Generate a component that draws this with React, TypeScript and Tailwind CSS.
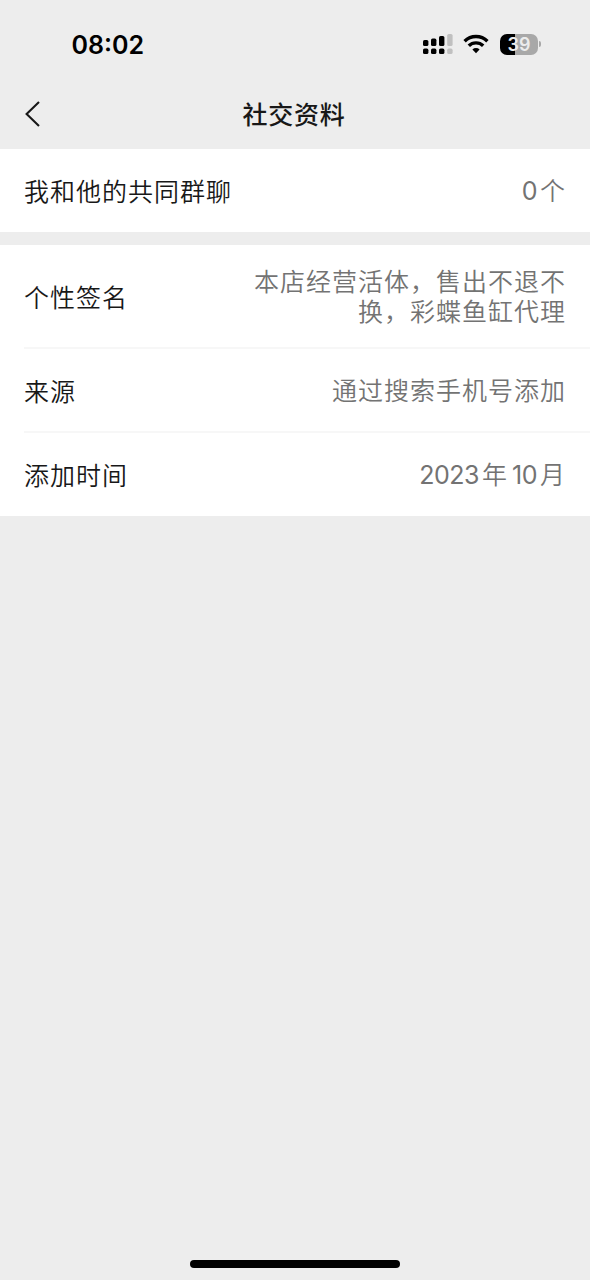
import React from 'react';

const SignalIcon = () => (
  <svg width="30" height="22" viewBox="0 0 30 22" fill="#000">
    <rect x="0" y="7" width="5.4" height="6" rx="1.6" />
    <rect x="8" y="5.6" width="5.4" height="7.4" rx="1.6" />
    <rect x="16" y="3" width="5.4" height="10" rx="1.6" />
    <rect x="24.2" y="1" width="5.4" height="12" rx="1.6" fill="#c0c0c0" />
    <rect x="0" y="15.6" width="5.4" height="5.4" rx="1.6" />
    <rect x="8" y="15.6" width="5.4" height="5.4" rx="1.6" />
    <rect x="16" y="15.6" width="5.4" height="5.4" rx="1.6" />
    <rect x="24.2" y="15.6" width="5.4" height="5.4" rx="1.6" fill="#c0c0c0" />
  </svg>
);

const WifiIcon = () => (
  <svg width="26" height="20" viewBox="0 0 26 20" fill="none" stroke="#000" strokeWidth="3.4">
    <path d="M1.6 7.2a16.2 16.2 0 0 1 22.8 0" />
    <path d="M5.8 11.8a10.3 10.3 0 0 1 14.4 0" />
    <path d="M13 19.2l-3.6-3.7a5.2 5.2 0 0 1 7.2 0z" fill="#000" stroke="none" />
  </svg>
);

const Battery = () => (
  <div className="flex items-center">
    <div className="flex h-[21px] w-[38px] items-center justify-center rounded-[7px] bg-linear-to-r from-black from-40% to-[#a8a8a8] to-40% pt-px font-['Inter'] text-[18px] leading-none font-semibold text-[#ececec]">
      39
    </div>
    <div className="ml-[1px] h-[6px] w-[2px] rounded-r-full bg-[#a8a8a8]" />
  </div>
);

const StatusBar = () => (
  <div className="flex h-[88px] items-center justify-between pr-[49px] pl-[71.5px] font-['Inter']">
    <span className="pt-px text-[25px] leading-[30px] font-semibold text-black">08:02</span>
    <div className="flex items-center">
      <SignalIcon />
      <div className="mr-[11px] ml-[10px]">
        <WifiIcon />
      </div>
      <Battery />
    </div>
  </div>
);

const Header = () => (
  <div className="grid h-[61px] grid-cols-[1fr_auto_1fr] items-center px-6 pb-[9px]">
    <svg width="18" height="26" viewBox="0 0 18 26" fill="none" stroke="#181818" strokeWidth="2.1">
      <path d="M15 1L2.6 13L15 25" />
    </svg>
    <h1 className="mr-[2px] pb-[2px] text-[25px] leading-[30px] font-medium tracking-[0.8px] text-[#181818]">社交资料</h1>
  </div>
);

interface RowProps {
  label: string;
  children: React.ReactNode;
  tall?: boolean;
  last?: boolean;
}

const Row = ({ label, children, tall, last }: RowProps) => (
  <div
    className={`ml-6 flex items-center justify-between pr-6 ${tall ? 'h-[104px]' : last ? 'h-[83px]' : 'h-[84px]'} ${
      last ? '' : 'border-b-2 border-[#f7f7f7]'
    }`}
  >
    <span className="shrink-0 pb-px text-[25px] leading-[30px] font-[350] tracking-[1px] text-[#181818]">{label}</span>
    <span className="pb-[2px] text-right text-[25px] leading-[30px] font-[350] tracking-[1px] text-[#737373]">
      {children}
    </span>
  </div>
);

const Num = ({ children }: { children: React.ReactNode }) => (
  <span className="mr-[3px] font-['Inter'] font-normal tracking-[-0.5px]">{children}</span>
);

const App = () => {
  return (
    <div className="flex h-[1280px] w-[590px] flex-col bg-[#ededed] font-['Noto_Sans_CJK_SC',sans-serif]">
      <StatusBar />
      <Header />

      <div className="mb-[13px] h-[83px] bg-white">
        <Row label="我和他的共同群聊" last>
          <Num>0</Num>个
        </Row>
      </div>

      <div className="bg-white">
        <Row label="个性签名" tall>
          <span className="block">本店经营活体，售出不退不</span>
          <span className="block">换，彩蝶鱼缸代理</span>
        </Row>
        <Row label="来源">通过搜索手机号添加</Row>
        <Row label="添加时间" last>
          <Num>2023</Num>
          <span className="mr-1">年</span>
          <Num>10</Num>月
        </Row>
      </div>

      {/* Home indicator */}
      <div className="mx-auto mt-auto mb-3 h-2 w-[210px] rounded-full bg-black" />
    </div>
  );
};

export default App;
